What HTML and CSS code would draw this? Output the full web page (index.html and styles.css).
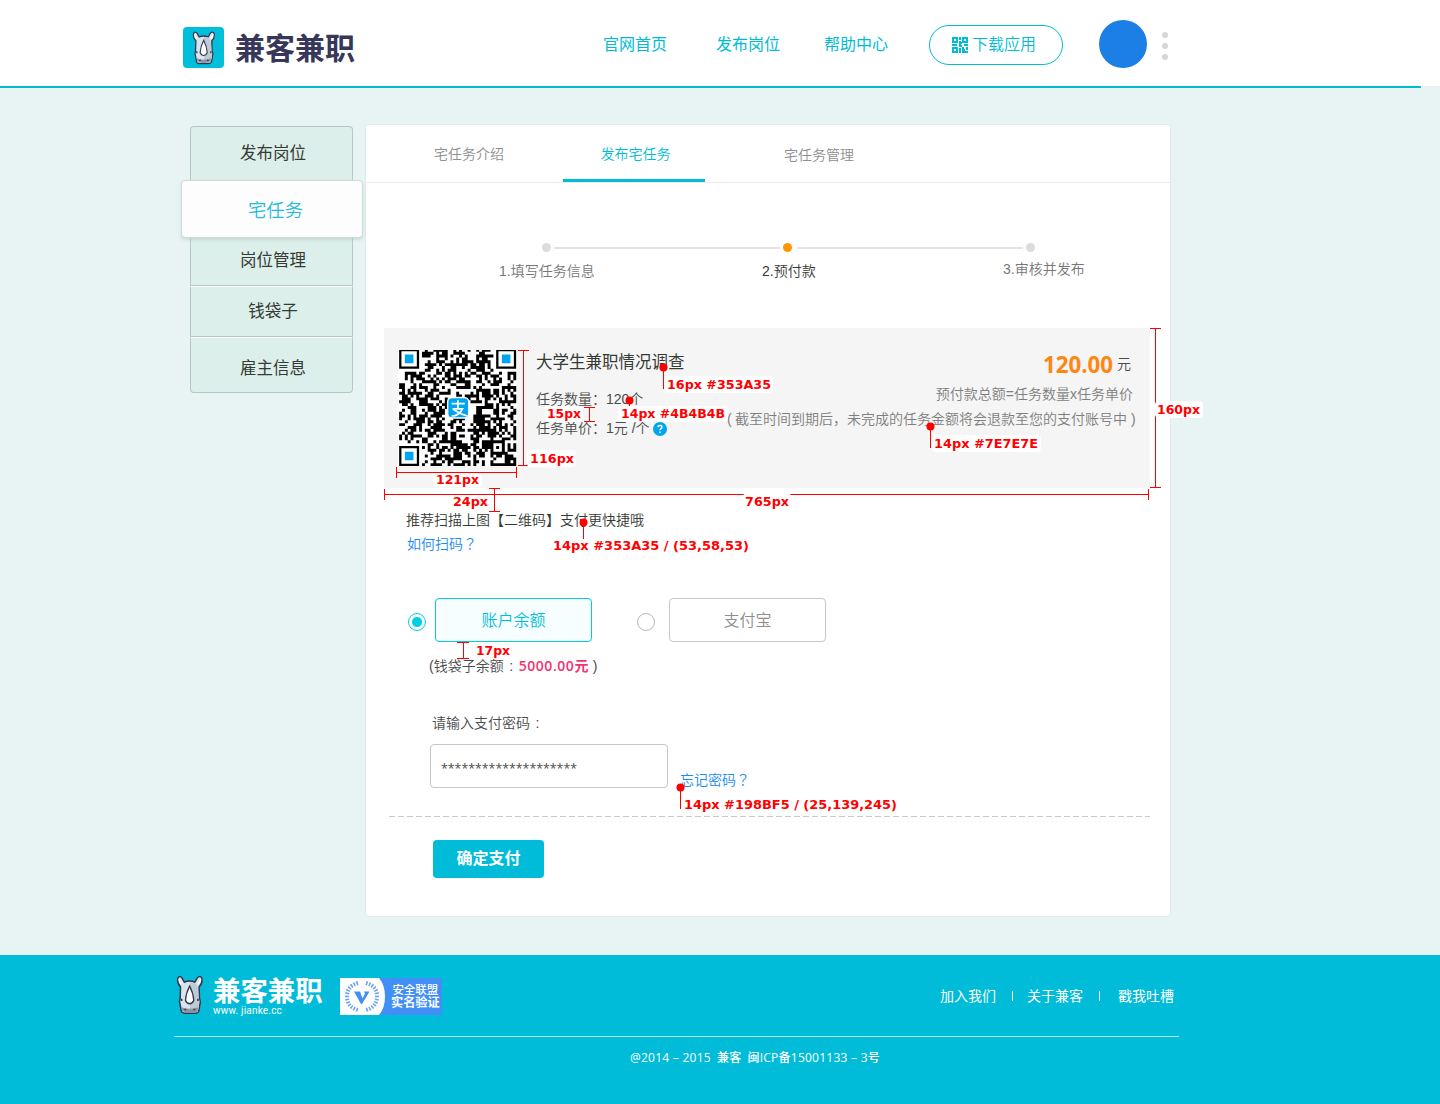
FILE: index.html
```html
<!DOCTYPE html>
<html lang="zh-CN">
<head>
<meta charset="utf-8">
<title>兼客兼职 - 预付款</title>
<link rel="stylesheet" href="styles.css">
</head>
<body>
<svg class="defs" width="0" height="0">
  <symbol id="rhino" viewBox="64 59 74 105">
    <path d="M76 91Q66 82 69 68Q73 60 80 68L86 79Q100 73 114 79L120 68Q128 60 132 68Q135 82 125 91L126 122Q130 130 127 138L124 156Q121 161 114 161L87 161Q80 161 78 156L75 138Q72 130 75 122Z" fill="#d9e5ec" stroke="#35384f" stroke-width="4" stroke-linejoin="round"/>
    <path d="M101 79Q119 78 122 95L124 122L125 142L121 158L101 158Z" fill="#bccbd6"/>
    <path d="M72 71L77 84M129 71L124 84" stroke="#fff" stroke-width="4"/>
    <path d="M79 145Q88 149 100 149Q114 149 123 145L121 155Q117 159 100 159Q84 159 80 154Z" fill="#8795a4"/>
    <path d="M100 89Q110 109 111 127Q107 136 100 136Q93 136 89 127Q90 109 100 89Z" fill="#fff" stroke="#35384f" stroke-width="3.5"/>
    <path d="M79 123v6M122 123v6M86 151h5M110 151h5" stroke="#35384f" stroke-width="4"/>
  </symbol>
</svg>

<header class="header">
  <div class="brand">
    <span class="brand-icon"><svg width="24" height="35"><use href="#rhino"/></svg></span>
    <span class="brand-name">兼客兼职</span>
  </div>
  <nav class="topnav"><a>官网首页</a><a>发布岗位</a><a>帮助中心</a></nav>
  <a class="download">
    <svg width="16" height="16" viewBox="0 0 16 16" fill="none" stroke="#00bcd4" stroke-width="2">
      <path d="M1 1h4v4H1zM11 1h4v4h-4zM1 11h4v4H1zM8 0v3M7 6h3M8 4v4M0 8h5M7 9h3M12 8h4M8 11v5M10 15h6M11 10v3h2M15 10v3"/>
    </svg>下载应用</a>
  <span class="avatar"></span>
  <span class="more"><i></i><i></i><i></i></span>
</header>

<main class="main">
  <aside class="sidebar">
    <a class="side-first">发布岗位</a>
    <a class="side-active">宅任务</a>
    <a class="side-jobs">岗位管理</a>
    <a class="side-purse">钱袋子</a>
    <a class="side-info">雇主信息</a>
  </aside>
  <section class="panel">
    <nav class="tabs"><a>宅任务介绍</a><a class="current">发布宅任务</a><a class="tab-manage">宅任务管理</a></nav>
    <div class="steps">
      <div class="track"><i class="dot"></i><i class="line"></i><i class="dot on"></i><i class="line second"></i><i class="dot"></i></div>
      <div class="step-labels"><span>1.填写任务信息</span><span class="step-now">2.预付款</span><span class="step-last">3.审核并发布</span></div>
    </div>

    <div class="task">
      <svg class="qr" width="119" height="116" viewBox="0 0 41.7 40.6" preserveAspectRatio="none">
        <rect width="41.7" height="40.6" fill="#fff"/>
        <path id="modules" transform="translate(.4 -.4)" fill="#000"/>
        <g transform="translate(.4 -.4)" fill="#00a5f0"><path d="M2 2h3v3H2zM36 2h3v3h-3zM2 36h3v3H2z"/><rect x="17" y="17" width="7.4" height="7.2" rx="1.6" stroke="#fff" stroke-width=".5"/><path d="M18.4 19.2h4.6M20.6 18v3M18.7 21h3.5Q21 23.5 18.4 23.5M19 21.2Q21.5 23 24 23.5" fill="none" stroke="#fff" stroke-width=".6"/></g>
      </svg>
      <div class="task-info">
        <h1>大学生兼职情况调查</h1>
        <p>任务数量：120个</p>
        <p>任务单价：1元 /个<svg class="help" width="14" height="14" viewBox="0 0 14 14"><circle cx="7" cy="7" r="7" fill="#00a5f0"/><path d="M4.9 5.3Q5 3.5 7 3.5Q9 3.5 9 5.2Q9 6.2 7.8 6.8Q7 7.2 7 8.3M7 9.5v1.6" fill="none" stroke="#fff" stroke-width="1.4"/></svg></p>
      </div>
      <div class="task-total">
        <div class="amount"><b>120.00</b>元</div>
        <p class="formula">预付款总额=任务数量x任务单价</p>
        <p class="notice"><span>(</span>截至时间到期后，未完成的任务金额将会退款至您的支付账号中<span>)</span></p>
      </div>
    </div>

    <div class="scan"><p>推荐扫描上图【二维码】支付更快捷哦</p><a>如何扫码<span class="mark" lang="zh-TW">？</span></a></div>

    <div class="methods">
      <i class="radio checked"></i><span class="method selected">账户余额</span>
      <i class="radio"></i><span class="method alipay">支付宝</span>
    </div>
    <p class="balance">(钱袋子余额<span class="colon">:</span><b>5000.00元</b> )</p>

    <p class="pw-label">请输入支付密码<span class="colon">:</span></p>
    <div class="pw-row"><div class="pw-field">********************</div><a>忘记密码<span class="mark" lang="zh-TW">？</span></a></div>
    <svg class="dash" width="761" height="1"><path d="M0 .5H761" stroke="#c9c9c9" stroke-dasharray="6 3"/></svg>
    <button class="submit">确定支付</button>
  </section>
</main>

<footer class="footer">
  <div class="foot-top">
    <svg class="foot-rhino" width="28" height="41"><use href="#rhino"/></svg>
    <div class="foot-brand"><strong>兼客兼职</strong><span>www. jianke.cc</span></div>
    <div class="badge">
      <svg width="46" height="37" viewBox="0 0 46 37">
        <path d="M0 0H39Q45 7 45 18.500T39 37H0Z" fill="#fff"/>
        <path d="M18 5Q7 8 7 18.500T18 32M26 5Q37 8 37 18.500T26 32" fill="none" stroke="#6aa5f6" stroke-width="4" stroke-dasharray="1.600 1.400"/>
        <path d="M14 13.500H20L22.500 20.500L25 15.500L24 13.500H29.500L22 26H21Z" fill="#418ff6"/>
      </svg>
      <div class="badge-text"><span>安全联盟</span><b>实名验证</b></div>
    </div>
    <nav class="foot-links"><a>加入我们</a><a>关于兼客</a><a>戳我吐槽</a></nav>
  </div>
  <p class="copyright"><span>@2014 – 2015</span><span>兼客</span><span>闽ICP备15001133 – 3号</span></p>
</footer>

<svg class="notes" width="1440" height="1104" viewBox="0 0 1440 1104">
  <g fill="none" stroke="#f00" shape-rendering="crispEdges">
    <path d="M518 350.500H529M523.500 350V466M518 465.500H528"/>
    <path d="M396.500 467V478M396 472.500H517M516.500 467V478"/>
    <path d="M384.500 489V500M384 494.500H1149M1148.500 489V500"/>
    <path d="M1150 328.500H1161M1155.500 328V488M1150 487.500H1161"/>
    <path d="M489 488.500H500M494.500 488V512M489 511.500H500"/>
    <path d="M584 407.500H595M589.500 407V421M584 421.500H595"/>
    <path d="M457 642.500H469M463.500 642V659M457 658.500H469"/>
    <path d="M663.500 367V389M629.500 400V422M930.500 426V448M583.500 522V539M680.500 787V809"/>
  </g>
  <g fill="#fff">
    <rect x="665" y="376" width="108" height="17" rx="4"/>
    <rect x="618" y="406" width="110" height="16" rx="4"/>
    <rect x="544" y="406" width="39" height="16" rx="4"/>
    <rect x="527" y="450" width="49" height="17" rx="4"/>
    <rect x="433" y="474" width="49" height="13" rx="4"/>
    <rect x="451" y="496" width="39" height="13" rx="4"/>
    <rect x="743" y="493" width="48" height="17" rx="4"/>
    <rect x="1155" y="401" width="48" height="17" rx="4"/>
    <rect x="932" y="435" width="109" height="17" rx="4"/>
  </g>
  <g fill="#f00"><circle cx="663.500" cy="367.500" r="4"/><circle cx="629.500" cy="400.500" r="4"/><circle cx="930.500" cy="426.500" r="4"/><circle cx="583.500" cy="522.500" r="4"/><circle cx="680.500" cy="787.500" r="4"/></g>
  <g class="note-text">
    <text x="667" y="389" textLength="104" lengthAdjust="spacingAndGlyphs">16px #353A35</text>
    <text x="621" y="418" textLength="104" lengthAdjust="spacingAndGlyphs">14px #4B4B4B</text>
    <text x="547" y="418" textLength="34" lengthAdjust="spacingAndGlyphs">15px</text>
    <text x="530" y="463" textLength="44" lengthAdjust="spacingAndGlyphs">116px</text>
    <text x="436" y="484" textLength="43" lengthAdjust="spacingAndGlyphs">121px</text>
    <text x="453" y="506" textLength="35" lengthAdjust="spacingAndGlyphs">24px</text>
    <text x="745" y="506" textLength="44" lengthAdjust="spacingAndGlyphs">765px</text>
    <text x="1157" y="414" textLength="43" lengthAdjust="spacingAndGlyphs">160px</text>
    <text x="934" y="448" textLength="104" lengthAdjust="spacingAndGlyphs">14px #7E7E7E</text>
    <text x="553" y="550" textLength="196" lengthAdjust="spacingAndGlyphs">14px #353A35 / (53,58,53)</text>
    <text x="476" y="655" textLength="34" lengthAdjust="spacingAndGlyphs">17px</text>
    <text x="684" y="809" textLength="213" lengthAdjust="spacingAndGlyphs">14px #198BF5 / (25,139,245)</text>
  </g>
</svg>
<script src="qr.js"></script>
</body>
</html>
```
FILE: styles.css
```css
* { box-sizing: border-box; }
body { margin: 0; background: #e8f4f4; color: #4b4b4b; font: 350 14px/20px "Liberation Sans", "Noto Sans CJK SC", sans-serif; position: relative; height: 1104px; overflow: hidden; }
p, h1 { margin: 0; white-space: nowrap; }
a, span { white-space: nowrap; }
svg { display: block; }
.defs { position: absolute; }

.header { height: 86px; background: #fff; display: flex; padding-left: 183px; }
.header::after { content: ""; position: absolute; left: 0; top: 86px; width: 1421px; height: 2px; background: #00bcd4; }
.brand { display: flex; width: 420px; padding-top: 27px; }
.brand-icon { width: 41px; height: 41px; border-radius: 4px; background: #00bfda; padding: 3px 0 0 9px; }
.brand-name { margin-left: 11px; font: 700 30px/38px "Noto Sans CJK SC", sans-serif; color: #373759; }
.topnav { display: flex; width: 326px; font-size: 16px; font-weight: 400; line-height: 90px; color: #00bcd4; }
.topnav a { width: 113px; flex: none; }
.topnav a:nth-child(2) { width: 108px; }
.download { width: 134px; height: 40px; margin-top: 25px; border: 1px solid #00bcd4; border-radius: 20px; display: flex; align-items: center; gap: 4px; padding-left: 22px; font-size: 16px; color: #00bcd4; }
.avatar { width: 48px; height: 48px; margin: 20px 15px 0 36px; border-radius: 50%; background: #1b7fe5; }
.more { display: flex; flex-direction: column; gap: 5px; padding-top: 32px; }
.more i { width: 6px; height: 6px; border-radius: 50%; background: #d6d6d6; }

.main { height: 869px; display: flex; padding: 38px 0 0 181px; }
.sidebar { width: 184px; padding-top: 2px; display: flex; flex-direction: column; font-family: "Noto Sans CJK SC", sans-serif; font-size: 16.5px; font-weight: 400; color: #353a35; text-align: center; }
.sidebar a { width: 163px; margin-left: 9px; border: 1px solid #b4c9bf; background: #dcefea; padding-left: 3px; }
.sidebar .side-first { height: 55px; border-bottom: 0; border-radius: 4px 4px 0 0; line-height: 51px; }
.sidebar .side-active { width: 182px; height: 58px; margin: -1px 0 0 0; padding-left: 7px; position: relative; border-color: #ccdcd6; border-radius: 4px; background: #fdfdfd; box-shadow: 0 2px 3px #b4c9bf88; line-height: 57px; font-size: 18.300px; font-weight: 350; color: #22bcd6; }
.sidebar .side-jobs { height: 48px; border-top: 0; line-height: 42px; }
.sidebar .side-purse { height: 51px; border-top-color: #fff; line-height: 47px; }
.sidebar .side-info { height: 56px; border-top-color: #fff; border-radius: 0 0 4px 4px; line-height: 59px; }

.panel { width: 806px; height: 793px; background: #fff; border: 1px solid #e0ebeb; border-radius: 4px; }
.tabs { height: 58px; display: flex; padding-left: 68px; border-bottom: 1px solid #ebebeb; line-height: 58px; color: #8e8e8e; }
.tabs a { width: 129px; }
.tabs .current { width: 142px; height: 57px; text-align: center; padding-left: 3px; margin-right: 79px; border-bottom: 3px solid #00bcd4; color: #00bcd4; }
.tabs .tab-manage { line-height: 60px; }

.steps { padding: 60px 84px 0 176px; height: 145px; }
.track { display: flex; align-items: center; }
.dot { width: 9px; height: 9px; border-radius: 50%; background: #dcdcdc; }
.dot.on { background: #ff9600; }
.line { width: 226px; height: 2px; margin: 0 3px; background: #e3e3e3; }
.line.second { margin-left: 5px; }
.step-labels { display: flex; margin: 9px 0 0 -43px; color: #777; }
.step-labels span { width: 263px; flex: none; }
.step-labels .step-now { width: 241px; color: #353a35; }
.step-labels .step-last { width: 90px; margin-top: -2px; }

.task { width: 766px; height: 160px; margin-left: 18px; background: #f5f5f5; display: flex; }
.qr { margin: 22px 0 0 14px; flex: none; }
.task-info { width: 180px; flex: none; padding: 22px 0 0 19px; }
.task-info h1 { font-size: 16.5px; line-height: 25px; font-weight: 400; color: #353a35; margin-bottom: 10px; }
.task-info p { height: 29px; line-height: 29px; display: flex; align-items: center; white-space: pre; }
.help { margin: 1px 0 0 3px; }
.task-total { width: 439px; flex: none; padding-top: 22px; display: flex; flex-direction: column; align-items: flex-end; color: #7e7e7e; }
.amount { display: flex; gap: 4px; padding-right: 5px; line-height: 29px; height: 28px; color: #4b4b4b; }
.amount b { font: 700 22.300px/29px "Open Sans", sans-serif; color: #ff8611; }
.formula { height: 24px; line-height: 33px; padding-right: 3px; }
.notice { height: 24px; line-height: 34px; display: flex; }
.notice span { width: 8px; }
.notice span:last-child { width: 9px; padding-left: 4px; }

.scan { height: 110px; padding: 20px 0 0 40px; line-height: 24px; color: #353a35; }
.scan a { margin-left: 1px; }
.scan a, .pw-row a { color: #198bf5; }
.mark { font-family: "Noto Sans CJK TC", sans-serif; line-height: 1; }
.methods { display: flex; align-items: center; padding-left: 42px; }
.radio { width: 18px; height: 18px; margin-top: 4px; border: 1px solid #b8b8b8; border-radius: 50%; }
.radio.checked { border-color: #00cee8; background: radial-gradient(circle, #00cee8 0 4.500px, #fff 5.500px); }
.method { width: 157px; height: 44px; margin-left: 9px; border: 1px solid #c6c6c6; border-radius: 4px; line-height: 44px; text-align: center; font-size: 16px; color: #8e8e8e; }
.method.selected { margin-right: 45px; border-color: #00cee8; background: #f6feff; color: #00bedc; }
.method.alipay { margin-left: 14px; }
.balance { padding-left: 63px; margin-top: 14px; white-space: pre; height: 20px; }
.balance b { font-family: "Open Sans", "Noto Sans CJK SC", sans-serif; font-weight: 600; line-height: 1; color: #f5326e; letter-spacing: .55px; }
.colon { display: inline-block; width: 15px; text-align: center; }
.pw-label { padding-left: 66px; margin-top: 37px; }
.pw-row { display: flex; height: 44px; margin: 11px 0 0 64px; }
.pw-field { width: 238px; height: 44px; margin-right: 12px; padding-left: 10px; border: 1px solid #c6c6c6; border-radius: 4px; font: 400 12.350px/48px "Open Sans", sans-serif; }
.pw-row a { padding-top: 26px; }
.dash { margin: 28px 0 23px 23px; }
.submit { width: 111px; height: 38px; margin-left: 67px; padding: 0 0 3px; border: 0; border-radius: 4px; background: #00bcd8; color: #fff; font: 700 16px/35px "Noto Sans CJK SC", sans-serif; display: block; }

.footer { height: 149px; background: #00bcd8; color: #fff; }
.foot-top { width: 1005px; height: 82px; margin-left: 174px; border-bottom: 1px solid #b2e7f0; display: flex; font-weight: 400; }
.foot-rhino { margin: 19px 0 0 2px; }
.foot-brand { width: 127px; padding: 19px 0 0 9px; display: flex; flex-direction: column; }
.foot-brand strong { font: 700 27.400px/31px "Noto Sans CJK SC", sans-serif; }
.foot-brand span { font: 400 10px/12px Roboto, sans-serif; letter-spacing: .2px; }
.badge { width: 102px; height: 37px; margin: 23px 0 0 9px; background: #418ff6; display: flex; }
.badge-text { padding: 4px 0 0 5px; display: flex; flex-direction: column; align-items: center; font-weight: 500; font-size: 11.500px; line-height: 16px; }
.badge-text b { font-size: 12.200px; line-height: 11px; }
.foot-links { display: flex; margin-left: 498px; line-height: 82px; }
.foot-links a + a { margin-left: 16px; padding-left: 15px; background: linear-gradient(#fff, #fff) 0 36px / 1px 10px no-repeat; }
.foot-links a:last-child { padding-left: 19px; }
.copyright { display: flex; gap: 6px; padding: 11px 0 0 630px; font: 500 12px/20px "Open Sans", "Noto Sans CJK SC", sans-serif; letter-spacing: .25px; }
.notes { position: absolute; left: 0; top: 0; }
.note-text { font: 700 12.300px "DejaVu Sans", sans-serif; fill: #f00; }
```
FILE: qr.js
```javascript
// Builds the 41 x 41 module grid of the payment code.
const N = 41;
let seed = 20151133;
const next = () => (seed = (seed * 1103515245 + 12345) % 2147483648) / 2147483648;
let d = "";
for (let y = 0; y < N; y++) {
  for (let x = 0; x < N; x++) {
    const on = next() < 0.52;
    const corner = (x < 8 && (y < 8 || y > 32)) || (x > 32 && y < 8);
    const mark = Math.max(Math.abs(x - 34), Math.abs(y - 34));
    if (corner) continue;
    if (mark <= 2 ? mark !== 1 : on) d += `M${x} ${y}h1.03v1.03h-1.03z`;
  }
}
// Finder rings at three corners.
for (const [x, y] of [[0, 0], [34, 0], [0, 34]]) {
  d += `M${x} ${y}h7v7h-7zM${x + .8} ${y + .8}v5.4h5.4v-5.4z`;
}
document.getElementById("modules").setAttribute("d", d);
```
